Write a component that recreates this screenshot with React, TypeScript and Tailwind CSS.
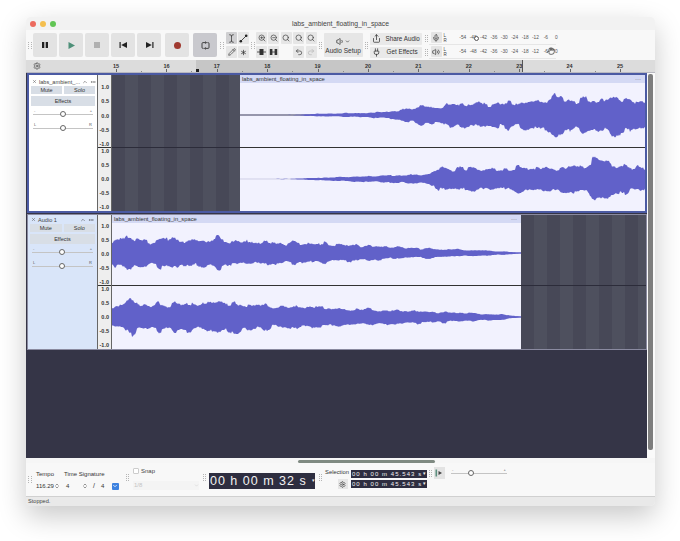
import { Asterisk, ChevronDown, ChevronUp, ChevronsUpDown, Hand, Mic, MoreHorizontal, Pencil, Plug, Redo2, Search, Settings, Share, TextCursor, Undo2, Volume1, Volume2, X, ZoomIn, ZoomOut } from 'lucide-react';
import type { ReactNode } from 'react';

const ink = 'text-[#3a3a3a]';

function Grip() {
  return (
    <div className="grid grid-cols-2 gap-[1px] w-[4px] shrink-0">
      {[0, 1, 2, 3, 4, 5, 6, 7].map((i) => (
        <div key={i} className="w-[1px] h-[1px] bg-[#b5b5b5]" />
      ))}
    </div>
  );
}

function TransportButton({ children, dark }: { children: ReactNode; dark?: boolean }) {
  return (
    <div className={`w-[24px] h-[24px] rounded-[2px] flex items-center justify-center shrink-0 ${dark ? 'bg-[#c9c9ce]' : 'bg-[#e3e3e3]'}`}>
      {children}
    </div>
  );
}

function Tool({ children, active }: { children: ReactNode; active?: boolean }) {
  return (
    <div className={`w-[11px] h-[12px] rounded-[1px] flex items-center justify-center ${active ? 'bg-[#d0d0d2]' : 'bg-[#e6e6e6]'}`}>
      {children}
    </div>
  );
}

const ticks = ['-54', '-48', '-42', '-36', '-30', '-24', '-18', '-12', '-6', '0'];

function Meter({ icon, overlay }: { icon: ReactNode; overlay?: ReactNode }) {
  return (
    <div className="relative flex items-center h-[14px] border-b border-[#e6e6e6] pl-[2px] w-[127px]">
      <div className="w-[11px] h-[11px] bg-[#e4e4e4] rounded-[1px] flex items-center justify-center shrink-0">{icon}</div>
      <div className="w-[8px] ml-[2px] text-[4.5px] leading-[5px] text-[#444] flex flex-col shrink-0">
        <span>L</span>
        <span>R</span>
      </div>
      <div className="flex ml-[6px]">
        {ticks.map((t) => (
          <span key={t} className="w-[10.4px] text-[4.8px] text-[#555] text-center">{t}</span>
        ))}
      </div>
      {overlay}
    </div>
  );
}

// small deterministic noise so the waveform looks the same on every load
function noise(i: number, seed: number) {
  const v = Math.sin(i * 12.9898 + seed * 78.233) * 43758.5453;
  return v - Math.floor(v);
}

function envAt(env: number[][], x: number) {
  for (let i = 1; i < env.length; i++) {
    if (x <= env[i][0]) {
      const [x0, y0] = env[i - 1];
      const [x1, y1] = env[i];
      return y0 + ((y1 - y0) * (x - x0)) / (x1 - x0);
    }
  }
  return env[env.length - 1][1];
}

function Wave({ env, width, height, center, seed, line = '#3a3a5a' }: { env: number[][]; width: number; height: number; center: number; seed: number; line?: string }) {
  const top: string[] = [];
  const bottom: string[] = [];
  for (let x = 0; x <= width; x++) {
    const a = envAt(env, x);
    const slow = 0.86 + 0.14 * Math.sin(x * 0.33 + seed) * Math.sin(x * 0.09 + seed * 2);
    const mid = 0.85 + 0.3 * noise(Math.floor(x / 4), seed + 3);
    const up = a * slow * mid * (0.94 + noise(x, seed) * 0.12);
    const down = a * slow * (0.85 + 0.35 * noise(Math.floor(x / 5), seed + 9)) * (0.94 + noise(x, seed + 5) * 0.12);
    top.push(`${x},${(center - up).toFixed(1)}`);
    bottom.unshift(`${x},${(center + down).toFixed(1)}`);
  }
  return (
    <svg width={width} height={height} viewBox={`0 0 ${width} ${height}`} className="block shrink-0">
      <line x1="0" y1={center} x2={width} y2={center} stroke={line} strokeWidth="1" />
      <polygon points={[...top, ...bottom].join(' ')} fill="#6161c9" />
    </svg>
  );
}

const t1a = [[0, 0], [60, 0.2], [65, 1], [110, 2], [130, 2.5], [160, 5], [179, 10], [195, 8], [209, 13], [240, 12], [280, 14], [300, 15], [312, 22], [335, 17], [360, 16], [380, 22], [395, 15], [405, 13]];
const t1b = [[0, 0], [50, 0.2], [70, 1], [120, 3], [180, 5], [189, 7], [199, 11], [224, 12], [260, 11], [300, 13], [340, 14], [356, 21], [380, 15], [405, 13]];
const t2a = [[0, 10], [15, 19], [33, 13], [58, 16], [70, 14], [93, 14], [105, 16], [130, 12], [190, 11], [240, 9], [290, 6], [340, 4], [390, 2], [409, 0.5]];
const t2b = [[0, 10], [18, 18], [40, 13], [60, 16], [85, 15], [110, 17], [140, 13], [190, 12], [240, 9], [290, 7], [340, 5], [390, 3], [409, 0.5]];

function Scale({ className }: { className: string }) {
  return (
    <div className={`flex flex-col justify-between items-end pr-[2px] ${className}`}>
      {['1.0', '0.5', '0.0', '-0.5', '-1.0'].map((s) => (
        <span key={s} className="text-[5.5px] leading-[6px] font-bold text-[#333]">{s}</span>
      ))}
    </div>
  );
}

function Slider({ left, right, knob }: { left: string; right: string; knob: number }) {
  return (
    <div className="mx-[4px] h-[14px] relative">
      <div className="flex justify-between px-[1px] text-[4px] leading-[5px] text-[#555]">
        <span>{left}</span>
        <span>{right}</span>
      </div>
      <div className="h-[1px] bg-[#c4c4c4] mt-[1px]" />
      <div className="absolute top-[3px] w-[6px] h-[6px] rounded-full border border-[#666] bg-white" style={{ left: knob }} />
    </div>
  );
}

function TrackPanel({ name, className }: { name: string; className: string }) {
  return (
    <div className={`shrink-0 flex flex-col ${className}`}>
      <div className="h-[9px] flex items-center px-[3px] gap-[2px] text-[#444]">
        <X size={5} strokeWidth={2} className="shrink-0" />
        <span className="text-[5.6px] leading-[8px] flex-1 whitespace-nowrap">{name}</span>
        <ChevronUp size={6} className="shrink-0" />
        <MoreHorizontal size={6} className="shrink-0" />
      </div>
      <div className="flex gap-[2px] mx-[2px]">
        <div className="flex-1 h-[8px] bg-[#d8dee6] text-[5.5px] leading-[8px] text-center text-[#333]">Mute</div>
        <div className="flex-1 h-[8px] bg-[#d8dee6] text-[5.5px] leading-[8px] text-center text-[#333]">Solo</div>
      </div>
      <div className="mx-[2px] mt-[2px] h-[10px] bg-[#d8dee6] text-[5.5px] leading-[10px] text-center text-[#333]">Effects</div>
      <div className="mt-[2px]">
        <Slider left="-" right="+" knob={27} />
      </div>
      <Slider left="L" right="R" knob={27} />
    </div>
  );
}

function ClipHeader({ title }: { title: string }) {
  return (
    <div className="h-[8px] bg-[#d4d9f4] flex items-center justify-between px-[2px] shrink-0">
      <span className="text-[5.8px] leading-[8px] text-[#333]">{title}</span>
      <span className="text-[6px] leading-[6px] text-[#555] pr-[2px]">···</span>
    </div>
  );
}

const stripes = 'bg-[repeating-linear-gradient(90deg,#474857_0,#474857_13px,#4e505e_13px,#4e505e_26px)]';

function Ruler() {
  const labels = ['15', '16', '17', '18', '19', '20', '21', '22', '23', '24', '25'];
  return (
    <div className="relative h-[13px] bg-[#dcdcdc] flex shrink-0 border-b border-[#b8b8c0]">
      <div className="absolute left-[170px] top-0 w-[326px] h-full bg-[#c6c6c6]" />
      <div className="relative w-[88px] flex items-center pl-[7px] shrink-0 bg-[#dcdcdc]">
        <Settings size={8} className="text-[#444]" />
      </div>
      <div className="relative flex">
        {labels.map((l, i) => (
          <div key={l} className="w-[50.4px] h-full relative text-[5.5px] leading-[12px] font-bold text-[#333]">
            <span className="absolute left-0 -translate-x-[1px] top-0">{l}</span>
            <div className="absolute left-[2px] bottom-0 w-[1px] h-[3px] bg-[#666]" />
            {i < 10 && <div className="absolute left-[27px] bottom-0 w-[1px] h-[1px] bg-[#888]" />}
          </div>
        ))}
      </div>
      <div className="absolute left-[170px] bottom-0 w-[3px] h-[3px] bg-[#222]" />
      <div className="absolute left-[496px] top-0 w-[1px] h-full bg-[#555]" />
    </div>
  );
}

function Display({ children, big }: { children: ReactNode; big?: boolean }) {
  return (
    <div className={`bg-[#2e2e40] text-[#f2f2f2] flex items-center justify-between overflow-hidden ${big ? 'w-[106px] h-[16px] text-[12.5px] tracking-[1px] pl-[1px]' : 'w-[76px] h-[8px] text-[6px] tracking-[1.05px] pl-[1px] pr-[1px]'}`}>
      <span className="whitespace-pre leading-none">{children}</span>
      <span className="text-[5px] tracking-normal">▾</span>
    </div>
  );
}

export default function App() {
  return (
    <div className="w-[680px] h-[541px] bg-white pt-[17px] pl-[26px] font-['Liberation_Sans',sans-serif] overflow-hidden">
      <div className="w-[629px] h-[489px] rounded-[5px] bg-[#f6f6f6] flex flex-col overflow-hidden shadow-[0_10px_28px_rgba(0,0,0,0.22)]">
        {/* title bar */}
        <div className="h-[13px] shrink-0 bg-[#f2f2f2] flex items-center relative pl-[4px] gap-[4px]">
          <div className="w-[6px] h-[6px] rounded-full bg-[#ec6a5e]" />
          <div className="w-[6px] h-[6px] rounded-full bg-[#f4bf4f]" />
          <div className="w-[6px] h-[6px] rounded-full bg-[#61c554]" />
          <div className="absolute inset-x-0 top-[1px] text-center text-[6.8px] leading-[12px] text-[#444]">labs_ambient_floating_in_space</div>
        </div>

        {/* toolbar */}
        <div className="h-[30px] shrink-0 bg-[#f8f8f8] flex items-center pl-[2px]">
          <Grip />
          <div className="flex gap-[2px] ml-[1px]">
            <TransportButton>
              <svg width="8" height="8" viewBox="0 0 8 8"><rect x="1" y="1" width="2.3" height="6" fill="#222" /><rect x="4.7" y="1" width="2.3" height="6" fill="#222" /></svg>
            </TransportButton>
            <TransportButton>
              <svg width="9" height="9" viewBox="0 0 9 9"><path d="M1.5 1 L8 4.5 L1.5 8Z" fill="#4d8f78" /></svg>
            </TransportButton>
            <TransportButton>
              <div className="w-[6px] h-[6px] bg-[#b0b0b0]" />
            </TransportButton>
            <TransportButton>
              <svg width="9" height="8" viewBox="0 0 9 8"><rect x="0.5" y="1" width="1.2" height="6" fill="#222" /><path d="M8 1 L2.2 4 L8 7Z" fill="#222" /></svg>
            </TransportButton>
            <TransportButton>
              <svg width="9" height="8" viewBox="0 0 9 8"><path d="M1 1 L6.8 4 L1 7Z" fill="#222" /><rect x="7.3" y="1" width="1.2" height="6" fill="#222" /></svg>
            </TransportButton>
            <div className="ml-[2px]">
              <TransportButton>
                <div className="w-[7px] h-[7px] rounded-full bg-[#a03a30]" />
              </TransportButton>
            </div>
            <div className="ml-[2px]">
              <TransportButton dark>
                <svg width="9" height="9" viewBox="0 0 9 9" fill="none" stroke="#333" strokeWidth="0.9"><path d="M5.2 1.6H2a1 1 0 0 0-1 1v3.8a1 1 0 0 0 1 1h.6" /><path d="M3.8 7.4H7a1 1 0 0 0 1-1V2.6a1 1 0 0 0-1-1h-.6" /><path d="M4.4 0.6 5.5 1.6 4.4 2.6" /><path d="M4.6 6.4 3.5 7.4 4.6 8.4" /></svg>
              </TransportButton>
            </div>
          </div>

          <div className="ml-[3px]"><Grip /></div>
          <div className={`grid grid-cols-2 gap-x-[1px] gap-y-[2px] ml-[2px] ${ink}`}>
            <Tool active><TextCursor size={9} /></Tool>
            <Tool>
              <svg width="9" height="9" viewBox="0 0 9 9"><path d="M1.5 7.5 L7.5 1.5" stroke="#222" strokeWidth="0.8" /><circle cx="1.8" cy="7.2" r="1.3" fill="#222" /><circle cx="7.2" cy="1.8" r="1.3" fill="#222" /></svg>
            </Tool>
            <Tool><Pencil size={8} /></Tool>
            <Tool><Asterisk size={9} /></Tool>
          </div>

          <div className="ml-[2px]"><Grip /></div>
          <div className={`grid grid-cols-5 gap-x-[1.4px] gap-y-[2px] ml-[1px] ${ink}`}>
            <Tool><ZoomIn size={8} /></Tool>
            <Tool><ZoomOut size={8} /></Tool>
            <Tool><Search size={8} /></Tool>
            <Tool><Search size={8} /></Tool>
            <Tool><Search size={8} /></Tool>
            <Tool>
              <svg width="9" height="8" viewBox="0 0 9 8"><rect x="2.5" y="1" width="4" height="6" fill="#333" /><path d="M0 4h9" stroke="#333" strokeWidth="0.8" /></svg>
            </Tool>
            <Tool>
              <svg width="9" height="8" viewBox="0 0 9 8"><rect x="0.8" y="1" width="2.6" height="6" fill="#333" /><rect x="5.6" y="1" width="2.6" height="6" fill="#333" /><path d="M3 4h3" stroke="#333" strokeWidth="0.8" /></svg>
            </Tool>
            <div className="w-[11px]" />
            <Tool><Undo2 size={8} /></Tool>
            <Tool><Redo2 size={8} className="text-[#b5b5b5]" /></Tool>
          </div>

          <div className="ml-[2px]"><Grip /></div>
          <div className="ml-[1px] w-[39px] h-[24px] bg-[#e6e6e6] rounded-[1px] flex flex-col items-center justify-center text-[#333]">
            <div className="flex items-center h-[12px]">
              <Volume1 size={9} />
              <ChevronDown size={5} strokeWidth={3} />
            </div>
            <span className="text-[6.5px] leading-[8px]">Audio Setup</span>
          </div>

          <div className="ml-[2px]"><Grip /></div>
          <div className="ml-[1px] flex flex-col gap-[2px] text-[#333]">
            <div className="w-[52px] h-[12px] bg-[#e9e9e9] rounded-[1px] flex items-center pl-[2px] gap-[5px]">
              <Share size={9} />
              <span className="text-[6.3px] leading-[8px]">Share Audio</span>
            </div>
            <div className="w-[52px] h-[11px] bg-[#e9e9e9] rounded-[1px] flex items-center pl-[2px] gap-[5px]">
              <Plug size={9} />
              <span className="text-[6.3px] leading-[8px] ml-[1px]">Get Effects</span>
            </div>
          </div>

          <div className="ml-[3px] flex flex-col">
            <div className="flex items-center">
              <Grip />
              <Meter
                icon={<Mic size={8} className="text-[#333]" />}
                overlay={<div className="absolute left-[45px] top-[5px] w-[5px] h-[5px] rounded-full border border-[#555] bg-white" />}
              />
            </div>
            <div className="flex items-center">
              <Grip />
              <Meter
                icon={<Volume2 size={8} className="text-[#333]" />}
                overlay={<Hand size={8} className="absolute left-[118px] top-[2px] text-[#222]" />}
              />
            </div>
          </div>
        </div>

        <Ruler />

        {/* tracks */}
        <div className="h-[385px] shrink-0 flex">
          <div className="w-[621px] bg-[#353547] flex flex-col pl-[1px]">
            <div className="h-[140px] w-[620px] border-2 border-[#4b5aa3] flex bg-white shrink-0">
              <TrackPanel name="labs_ambient_..." className="w-[68px] bg-white pt-[2px]" />
              <div className="w-[15px] shrink-0 flex flex-col bg-[#eeeeee] border-x border-[#666]">
                <Scale className="h-[72px] pt-[9px]" />
                <div className="h-[1px] bg-[#333] shrink-0" />
                <Scale className="h-[63px] pb-[1px]" />
              </div>
              <div className={`w-[128px] shrink-0 flex flex-col ${stripes}`}>
                <div className="h-[73px] border-b border-[#2c2c3a]" />
              </div>
              <div className="flex-1 flex flex-col bg-[#f2f2fe] overflow-hidden">
                <ClipHeader title="labs_ambient_floating_in_space" />
                <Wave env={t1a} width={405} height={64} center={32} seed={1} />
                <div className="h-[1px] bg-[#333] shrink-0" />
                <Wave env={t1b} width={405} height={63} center={31} seed={4} line="#cfcfe6" />
              </div>
            </div>

            <div className="h-[136px] w-[620px] mt-[1px] border border-[#8a8aa0] flex shrink-0">
              <TrackPanel name="Audio 1" className="w-[69px] bg-[#d9e5f9]" />
              <div className="w-[15px] shrink-0 flex flex-col bg-[#eeeeee] border-x border-[#666]">
                <Scale className="h-[70px] pt-[8px]" />
                <div className="h-[1px] bg-[#333] shrink-0" />
                <Scale className="h-[63px] pb-[1px]" />
              </div>
              <div className="w-[409px] shrink-0 flex flex-col bg-[#f2f2fe] overflow-hidden">
                <ClipHeader title="labs_ambient_floating_in_space" />
                <Wave env={t2a} width={409} height={62} center={30} seed={7} line="#6161c9" />
                <div className="h-[1px] bg-[#333] shrink-0" />
                <Wave env={t2b} width={409} height={63} center={31} seed={11} line="#6161c9" />
              </div>
              <div className={`flex-1 ${stripes}`}>
                <div className="h-[71px] border-b border-[#2c2c3a]" />
              </div>
            </div>
          </div>
          <div className="w-[8px] bg-[#fafafa] pl-[1px] pt-[1px]">
            <div className="w-[5px] h-[376px] bg-[#7d7d7d] rounded-[2px]" />
          </div>
        </div>

        {/* horizontal scroll */}
        <div className="h-[5px] shrink-0 bg-[#f6f6f6] pl-[272px] pt-[2px]">
          <div className="w-[137px] h-[3px] bg-[#7f8a82] rounded-[2px]" />
        </div>

        {/* bottom toolbar */}
        <div className="h-[33px] shrink-0 bg-[#f8f8f8] flex items-start pl-[2px] text-[#333]">
          <div className="mt-[13px]"><Grip /></div>
          <div className="ml-[2px] mt-[7px] w-[26px]">
            <div className="text-[6px] leading-[8px] pl-[2px]">Tempo</div>
            <div className="flex items-center h-[10px] mt-[3px] pl-[2px]">
              <span className="text-[6px] leading-[8px]">116.29</span>
              <ChevronsUpDown size={6} className="shrink-0" />
            </div>
          </div>
          <div className="ml-[4px] mt-[7px]">
            <div className="text-[6px] leading-[8px]">Time Signature</div>
            <div className="flex items-center h-[10px] mt-[3px]">
              <span className="text-[6px] w-[18px] pl-[2px]">4</span>
              <ChevronsUpDown size={6} />
              <span className="text-[7px] ml-[5px] mr-[5px]">/</span>
              <span className="text-[6px] w-[11px] pl-[1px]">4</span>
              <div className="w-[7px] h-[7px] rounded-[1px] bg-[#3d82e0] flex items-center justify-center ml-[1px]">
                <ChevronDown size={6} strokeWidth={3} className="text-white" />
              </div>
            </div>
          </div>
          <div className="ml-[7px] mt-[11px]"><Grip /></div>
          <div className="ml-[3px] mt-[4px] w-[66px]">
            <div className="flex items-center gap-[2px]">
              <div className="w-[6px] h-[6px] border border-[#ccc] bg-white rounded-[1px]" />
              <span className="text-[6px] leading-[8px] text-[#444]">Snap</span>
            </div>
            <div className="flex items-center justify-between mt-[6px] text-[#c4c4c4] h-[9px] bg-[#f4f4f4]">
              <span className="text-[6px] pl-[1px]">1/8</span>
              <ChevronDown size={5} />
            </div>
          </div>
          <div className="ml-[4px] mt-[11px]"><Grip /></div>
          <div className="ml-[2px] mt-[10px]">
            <Display big>00 h 00 m 32 s</Display>
          </div>
          <div className="ml-[4px] mt-[11px]"><Grip /></div>
          <div className="ml-[2px] mt-[5px] w-[24px] flex flex-col items-end">
            <span className="text-[5.8px] leading-[8px]">Selection</span>
            <div className="w-[10px] h-[10px] bg-[#e6e6e6] flex items-center justify-center mt-[3px] mr-[1px]">
              <Settings size={7} />
            </div>
          </div>
          <div className="ml-[2px] mt-[7px] flex flex-col gap-[2px]">
            <Display>00 h 00 m 45.543 s</Display>
            <Display>00 h 00 m 45.543 s</Display>
          </div>
          <div className="ml-[2px] mt-[7px]"><Grip /></div>
          <div className="ml-[1px] mt-[4px] w-[11px] h-[12px] bg-[#e3e3e3] flex items-center justify-center">
            <svg width="8" height="8" viewBox="0 0 8 8"><rect x="0.5" y="0.5" width="1.6" height="7" fill="#5d8f7f" /><path d="M3.5 2 L7 4 L3.5 6Z" fill="#444" /></svg>
          </div>
          <div className="ml-[2px] w-[64px] mt-[4px]">
            <Slider left="-" right="+" knob={17} />
          </div>
        </div>

        {/* status bar */}
        <div className="h-[10px] shrink-0 bg-[#e9e9e9] border-t border-[#d0d0d0] text-[5.6px] leading-[9px] text-[#444] pl-[2px]">Stopped.</div>
      </div>
    </div>
  );
}
